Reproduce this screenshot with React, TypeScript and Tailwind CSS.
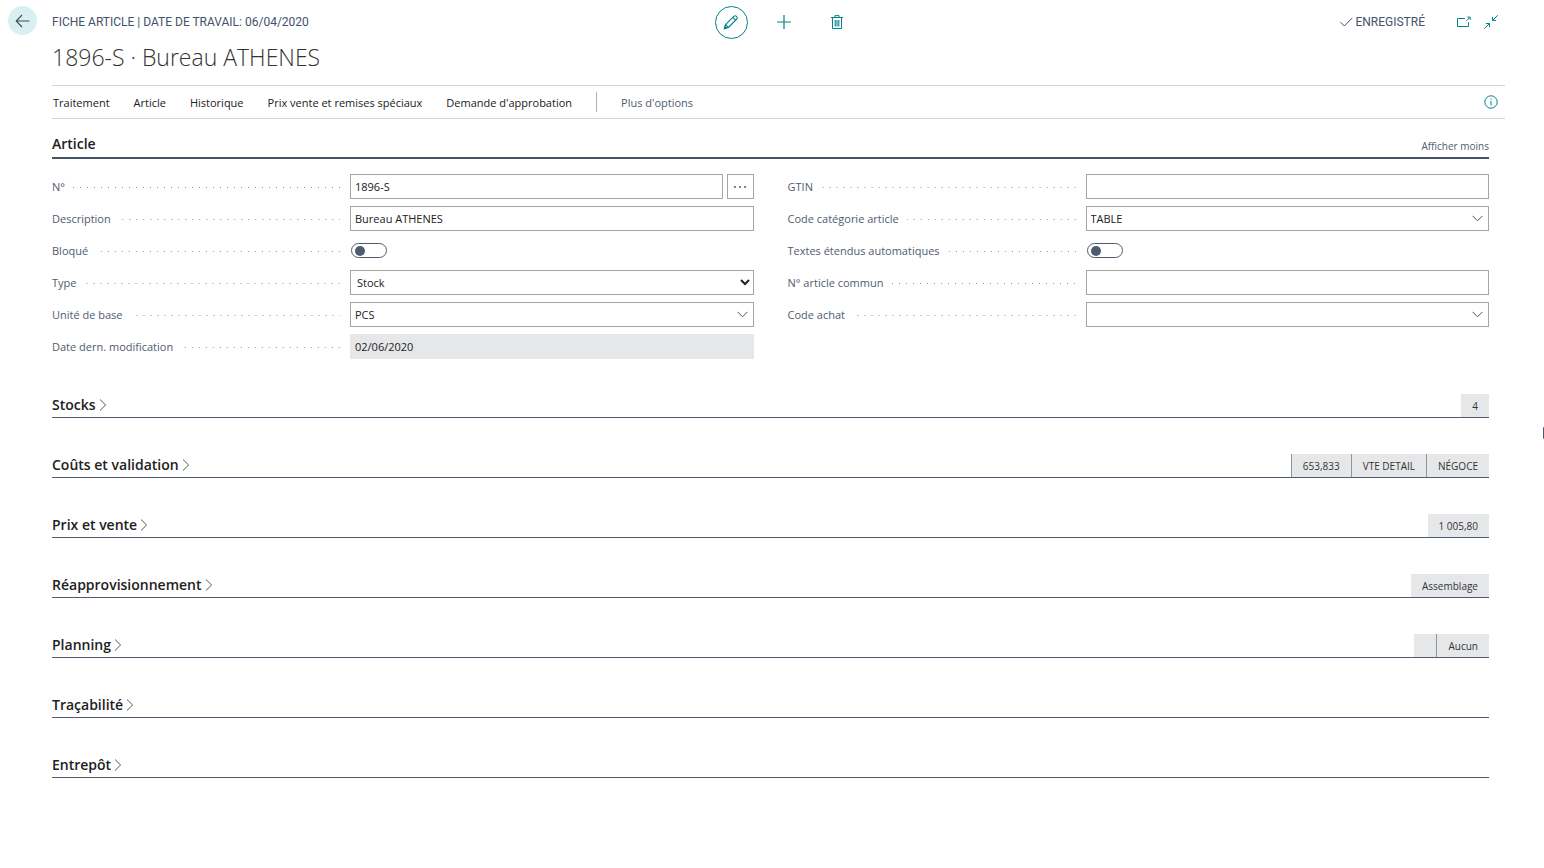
import { useId, useState, type ReactNode } from "react";

const inputText =
  "h-full w-full min-w-0 flex-1 bg-transparent px-1 text-[11px] text-[#212121] outline-none";
const inputBox = "flex h-[25px] w-full items-center border border-[#a6a6a6] bg-white";

function ArrowLeft() {
  return (
    <svg width="16" height="14" viewBox="0 0 16 14" fill="none" stroke="#3b4a55" strokeWidth="1.1">
      <path d="M14.5 7H1.5M7 1 1.2 7 7 13" />
    </svg>
  );
}

function Pencil() {
  return (
    <svg width="16" height="16" viewBox="0 0 16 16" fill="none" stroke="#00838a" strokeWidth="1.1">
      <path d="M1.5 14.5 2.6 10.6 11 2.2a1.5 1.5 0 0 1 2.2 0l.6.6a1.5 1.5 0 0 1 0 2.2L5.4 13.4Z" />
      <path d="M2.6 10.6 5.4 13.4M9.8 3.4l2.8 2.8" />
      <path d="M1.3 14.7 1.9 12.6 3.4 14.1Z" fill="#00838a" />
    </svg>
  );
}

function Plus() {
  return (
    <svg width="14" height="14" viewBox="0 0 14 14" fill="none" stroke="#00838a" strokeWidth="1.2">
      <path d="M7 0v14M0 7h14" />
    </svg>
  );
}

function Trash() {
  return (
    <svg width="12" height="14" viewBox="0 0 12 14" fill="none" stroke="#00838a">
      <path d="M0 2.5h12M1.5 2.5v11h9v-11M4 2.5V.6h4v1.9" />
      <path d="M4.2 5v6.5M6 5v6.5M7.8 5v6.5" strokeWidth="1.1" />
    </svg>
  );
}

function Check() {
  return (
    <svg width="13" height="10" viewBox="0 0 13 10" fill="none" stroke="#44546a" strokeWidth="1">
      <path d="M.5 5.2 4.3 9 12.4.8" />
    </svg>
  );
}

function PopOut() {
  return (
    <svg width="14" height="12" viewBox="0 0 14 12" fill="none" stroke="#00838a">
      <path d="M8 2.5H.5v8h11V6.2" />
      <path d="M9.4 4.8 12.8 1.4M10.4 1.1h2.8v2.8" />
    </svg>
  );
}

function Collapse() {
  return (
    <svg width="14" height="14" viewBox="0 0 14 14" fill="none" stroke="#00838a">
      <path d="M13.7.3 8.8 5.2M8.5 1.9v3.6h3.6" />
      <path d="M.3 13.7 5.2 8.8M1.9 8.5h3.6v3.6" />
    </svg>
  );
}

function Info() {
  return (
    <svg width="14" height="14" viewBox="0 0 14 14" fill="none" stroke="#00838a">
      <circle cx="7" cy="7" r="6.2" />
      <path d="M7 6v4.4M7 3.6v1.2" />
    </svg>
  );
}

function ChevronRight() {
  return (
    <svg width="8" height="12" viewBox="0 0 8 12" fill="none" stroke="#555" strokeWidth="1">
      <path d="M1 .5 6.6 6 1 11.5" />
    </svg>
  );
}

function ChevronDown() {
  return (
    <svg width="11" height="7" viewBox="0 0 11 7" fill="none" stroke="#555" strokeWidth="1">
      <path d="M.5.8 5.5 5.8 10.5.8" />
    </svg>
  );
}

function Row({ label, children }: { label: string; children: (id: string) => ReactNode }) {
  const id = useId();
  return (
    <div className="flex h-[25px] items-center">
      <div className="flex w-[298px] shrink-0 items-center gap-2 pt-[2px] pr-[10px]">
        <label htmlFor={id} className="whitespace-nowrap text-[11px] text-[#505c6d]">
          {label}
        </label>
        <span className="h-px flex-1 bg-[linear-gradient(to_left,#8f959c_1px,transparent_1px)] bg-[length:7px_1px] bg-right bg-repeat-x" />
      </div>
      <div className="flex min-w-0 flex-1 items-center gap-1">{children(id)}</div>
    </div>
  );
}

function TextRow({ label, value = "" }: { label: string; value?: string }) {
  return (
    <Row label={label}>
      {(id) => (
        <div className={inputBox}>
          <input id={id} defaultValue={value} className={inputText} />
        </div>
      )}
    </Row>
  );
}

function LookupRow({ label, value = "" }: { label: string; value?: string }) {
  return (
    <Row label={label}>
      {(id) => (
        <div className={inputBox}>
          <input id={id} defaultValue={value} className={inputText} />
          <button type="button" aria-label={"Choisir " + label} className="px-[5px]">
            <ChevronDown />
          </button>
        </div>
      )}
    </Row>
  );
}

function SwitchRow({ label }: { label: string }) {
  return (
    <Row label={label}>
      {(id) => (
        <input
          id={id}
          type="checkbox"
          role="switch"
          className="ml-px flex h-[15px] w-9 appearance-none items-center rounded-full border border-[#505c6d] px-[3px] before:size-[10px] before:rounded-full before:bg-[#505c6d] checked:justify-end"
        />
      )}
    </Row>
  );
}

function FastTab({ title, values = [] }: { title: string; values?: string[] }) {
  const [open, setOpen] = useState(false);
  return (
    <section className="flex h-6 items-end justify-between border-b border-[#505c6d]">
      <h2>
        <button
          type="button"
          aria-expanded={open}
          onClick={() => setOpen(!open)}
          className="flex items-center gap-[3px] pb-px text-[14px] leading-[22px] font-semibold text-[#212121]"
        >
          {title}
          <ChevronRight />
        </button>
      </h2>
      <ul className="flex h-[23px] divide-x divide-[#8f959c] bg-[#e6e7e9] text-[10px] leading-[25px] text-[#333]">
        {values.map((v, i) => (
          <li
            key={i}
            className={values.length === 3 && i === 0 ? "border-l border-l-[#8f959c] px-[11px]" : "px-[11px]"}
          >
            {v}
          </li>
        ))}
      </ul>
    </section>
  );
}

const menu = [
  "Traitement",
  "Article",
  "Historique",
  "Prix vente et remises spéciaux",
  "Demande d'approbation",
];

export default function App() {
  return (
    <div className="relative flex min-h-screen overflow-x-hidden bg-white font-['Open_Sans','Noto_Sans',sans-serif]">
      <div className="w-[52px] shrink-0 pt-[6px] pl-2">
        <button
          type="button"
          aria-label="Retour"
          className="flex size-[29px] items-center justify-center rounded-full bg-[#d9f0f2]"
        >
          <ArrowLeft />
        </button>
      </div>

      <div className="min-w-0 flex-1 pr-[39px]">
        <header>
          <div className="grid h-11 grid-cols-[1fr_auto_1fr] items-center">
            <p className="font-['Roboto',sans-serif] text-[12px] text-[#44526a]">
              FICHE ARTICLE | DATE DE TRAVAIL: 06/04/2020
            </p>
            <div className="flex items-center">
              <button
                type="button"
                aria-label="Modifier"
                className="flex size-[33px] items-center justify-center rounded-full border border-[#00838a]"
              >
                <Pencil />
              </button>
              <button type="button" aria-label="Nouveau" className="ml-[29px]">
                <Plus />
              </button>
              <button type="button" aria-label="Supprimer" className="ml-10">
                <Trash />
              </button>
            </div>
            <div className="flex items-center justify-end pr-[7px]">
              <span className="flex items-center gap-[2px] font-['Roboto',sans-serif] text-[12px] text-[#44526a]">
                <Check />
                ENREGISTRÉ
              </span>
              <button type="button" aria-label="Ouvrir dans une nouvelle fenêtre" className="ml-8">
                <PopOut />
              </button>
              <button type="button" aria-label="Réduire" className="ml-[13px]">
                <Collapse />
              </button>
            </div>
          </div>
          <h1 className="h-[41px] text-[23px] leading-[26px] font-light text-[#333]">
            1896-S · Bureau ATHENES
          </h1>
        </header>

        <nav className="flex h-[34px] items-center gap-6 border-y border-[#d3d6d9] pr-[7px] pl-px text-[11px] text-[#212121]">
          {menu.map((m) => (
            <button key={m} type="button" className="pt-[2px] whitespace-nowrap">
              {m}
            </button>
          ))}
          <span className="h-5 w-px bg-[#a9b0b8]" />
          <button type="button" className="pt-[2px] whitespace-nowrap text-[#505c6d]">
            Plus d'options
          </button>
          <button type="button" aria-label="Informations" className="ml-auto">
            <Info />
          </button>
        </nav>

        <main className="pr-4">
          <section>
            <div className="flex h-10 items-end justify-between border-b-2 border-[#44526a]">
              <h2 className="pb-px text-[14px] leading-[24px] font-semibold text-[#212121]">Article</h2>
              <button type="button" className="text-[10px] leading-[22px] text-[#505c6d]">
                Afficher moins
              </button>
            </div>
            <form className="grid grid-cols-2 gap-x-[34px] pt-[15px]">
              <div className="flex flex-col gap-[7px]">
                <Row label="N°">
                  {(id) => (
                    <>
                      <div className={inputBox}>
                        <input id={id} defaultValue="1896-S" className={inputText} />
                      </div>
                      <button
                        type="button"
                        aria-label="Assistance à la modification"
                        className="flex h-[25px] w-[27px] shrink-0 items-center justify-center gap-[3px] border border-[#a6a6a6]"
                      >
                        <span className="size-[2px] rounded-full bg-[#505c6d]" />
                        <span className="size-[2px] rounded-full bg-[#505c6d]" />
                        <span className="size-[2px] rounded-full bg-[#505c6d]" />
                      </button>
                    </>
                  )}
                </Row>
                <TextRow label="Description" value="Bureau ATHENES" />
                <SwitchRow label="Bloqué" />
                <Row label="Type">
                  {(id) => (
                    <select
                      id={id}
                      className="h-[25px] w-full border border-[#a6a6a6] bg-white px-[2px] text-[11px] text-[#212121]"
                    >
                      <option>Stock</option>
                    </select>
                  )}
                </Row>
                <LookupRow label="Unité de base" value="PCS" />
                <Row label="Date dern. modification">
                  {(id) => (
                    <div className="flex h-[25px] w-full items-center border border-[#e6e7e9] bg-[#e6e7e9]">
                      <input id={id} readOnly defaultValue="02/06/2020" className={inputText} />
                    </div>
                  )}
                </Row>
              </div>
              <div className="flex flex-col gap-[7px]">
                <TextRow label="GTIN" />
                <LookupRow label="Code catégorie article" value="TABLE" />
                <SwitchRow label="Textes étendus automatiques" />
                <TextRow label="N° article commun" />
                <LookupRow label="Code achat" />
              </div>
            </form>
          </section>

          <div className="flex flex-col gap-9 pt-[35px]">
            <FastTab title="Stocks" values={["4"]} />
            <FastTab title="Coûts et validation" values={["653,833", "VTE DETAIL", "NÉGOCE"]} />
            <FastTab title="Prix et vente" values={["1 005,80"]} />
            <FastTab title="Réapprovisionnement" values={["Assemblage"]} />
            <FastTab title="Planning" values={["", "Aucun"]} />
            <FastTab title="Traçabilité" />
            <FastTab title="Entrepôt" />
          </div>
        </main>
      </div>

      <span className="absolute top-[427px] right-0 h-3 w-px rounded-l-full bg-[#505c6d]" />
    </div>
  );
}
